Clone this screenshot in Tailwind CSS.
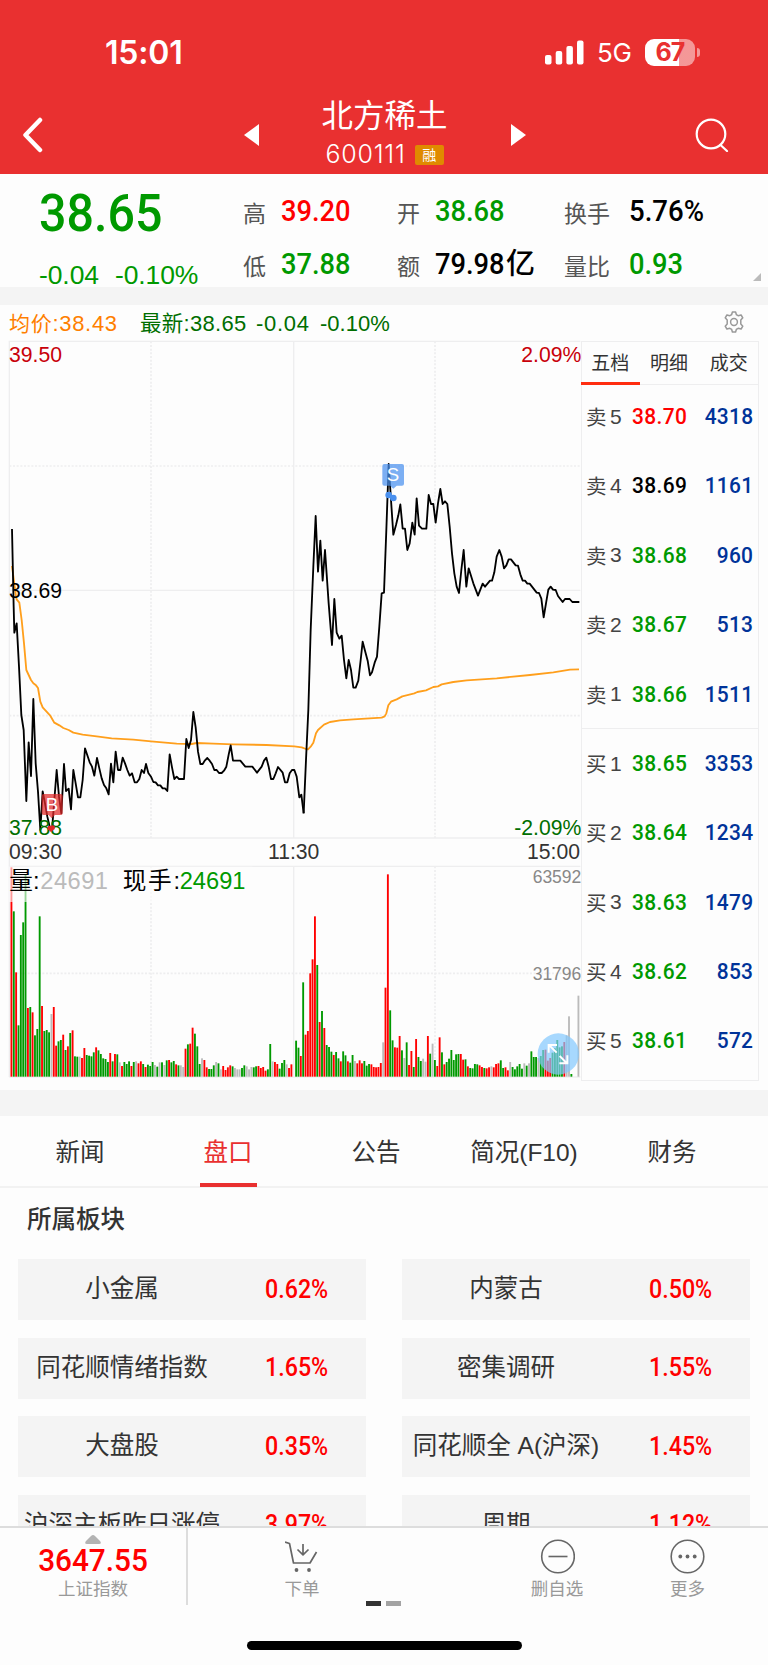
<!DOCTYPE html>
<html lang="zh-CN">
<head>
    <meta charset="UTF-8">
    <meta name="viewport" content="width=device-width, initial-scale=1.0">
    <title>北方稀土 600111</title>
    <script src="https://cdn.jsdelivr.net/npm/@tailwindcss/browser@4"></script>
</head>
<body class="bg-[#fdfdfd] font-['Liberation_Sans','Noto_Sans_CJK_SC',sans-serif] text-[#333]">
<div class="flex h-[1665px] w-[768px] flex-col overflow-hidden">

    <header class="h-[174px] shrink-0 bg-[#e93030] text-white">
        <!-- status bar -->
        <div class="flex h-[94px] items-center justify-between pl-[105px] pr-[68px] pt-[10px] font-['Inter',sans-serif]">
            <span class="pt-[2px] text-[32px] font-semibold leading-none tracking-[-0.2px]">15:01</span>
            <div class="flex items-center">
                <svg class="h-[25px] w-[39px]" viewBox="0 0 39 25" fill="currentColor">
                    <rect x="0" y="15" width="6.5" height="9.5" rx="2"/>
                    <rect x="10.7" y="11" width="6.5" height="13.5" rx="2"/>
                    <rect x="21.4" y="6" width="6.5" height="18.5" rx="2"/>
                    <rect x="32" y="0.5" width="6.5" height="24" rx="2"/>
                </svg>
                <span class="ml-[13px] mt-[2px] w-[35px] text-[26px] leading-none tracking-[-0.3px]">5G</span>
                <div class="ml-[13px] flex h-[27px] w-[50px] items-center justify-center rounded-[9px] bg-linear-to-r from-white from-68% to-white/50 to-68% text-[25px] font-bold leading-none tracking-[-1px] text-[#e93030]">67</div>
                <div class="ml-[2px] h-[9px] w-[3px] rounded-r-full bg-white/50"></div>
            </div>
        </div>
        <!-- title bar -->
        <div class="flex h-[80px] items-center justify-between pl-[22px] pr-[39px]">
            <svg class="mt-[2px] h-[36px] w-[22px]" viewBox="0 0 22 36" fill="none" stroke="currentColor" stroke-width="4.5" stroke-linecap="round" stroke-linejoin="round"><path d="M18 3 3.5 18 18 33"/></svg>
            <div class="ml-[30px] flex items-center">
                <svg class="mt-[1px] h-[22px] w-[15px]" viewBox="0 0 15 22" fill="currentColor"><path d="M15 0v22L0 11z"/></svg>
                <div class="flex w-[252px] flex-col items-center">
                    <div class="mb-[7px] -mt-[4px] text-[31.5px] leading-[38px]">北方稀土</div>
                    <div class="flex h-[26px] items-center pt-[1px]">
                        <span class="font-['Inter',sans-serif] text-[25px] font-light tracking-[0.8px]">600111</span>
                        <span class="ml-[9px] flex h-[20px] w-[29px] items-center justify-center rounded-[2px] bg-[#e08a00] text-[14px]">融</span>
                    </div>
                </div>
                <svg class="mt-[1px] h-[22px] w-[15px]" viewBox="0 0 15 22" fill="currentColor"><path d="M0 0v22l15-11z"/></svg>
            </div>
            <svg class="mt-[2px] h-[34px] w-[34px]" viewBox="0 0 34 34" fill="none" stroke="currentColor" stroke-width="2.2" stroke-linecap="round"><circle cx="16" cy="16" r="14.3"/><path d="m25.500 27 6.500 6"/></svg>
        </div>
    </header>

    <!-- quote -->
    <section class="flex h-[113px] shrink-0 text-[23px]">
        <div class="w-[243px] shrink-0 pl-[39px] text-[#009900]">
            <div class="mt-[13px] h-[54px] origin-left scale-x-[.93] whitespace-nowrap font-['Roboto'] text-[52px] font-medium leading-[54px]">38.65</div>
            <div class="mt-[21px] flex gap-[16px] whitespace-nowrap text-[26.5px] leading-[27px] tracking-[-0.1px]"><span>-0.04</span><span>-0.10%</span></div>
        </div>
        <div class="mt-[11px] grid h-[106px] grid-cols-[154px_167px_190px] grid-rows-2 text-[#555]">
            <div class="flex items-center"><span class="w-[38px] pt-[5px]">高</span><span class="origin-left scale-x-[.94] font-['Roboto'] font-medium text-[29px] text-[#f00]">39.20</span></div>
            <div class="flex items-center"><span class="w-[38px] pt-[5px]">开</span><span class="origin-left scale-x-[.94] font-['Roboto'] font-medium text-[29px] text-[#009900]">38.68</span></div>
            <div class="flex items-center"><span class="w-[65px] pt-[5px]">换手</span><span class="origin-left scale-x-[.95] font-['Roboto'] font-medium text-[29px] text-black">5.76%</span></div>
            <div class="flex items-center"><span class="w-[38px] pt-[5px]">低</span><span class="origin-left scale-x-[.94] font-['Roboto'] font-medium text-[29px] text-[#009900]">37.88</span></div>
            <div class="flex items-center text-black"><span class="w-[38px] pt-[5px] text-[#555]">额</span><span class="w-[71px] origin-left scale-x-[.94] font-['Roboto'] font-medium text-[29px]">79.98</span><span class="text-[29px] font-medium leading-none">亿</span></div>
            <div class="flex items-center"><span class="w-[65px] pt-[5px]">量比</span><span class="origin-left scale-x-[.94] font-['Roboto'] font-medium text-[29px] text-[#009900]">0.93</span></div>
        </div>
        <svg class="mb-[6px] ml-[-1px] h-[8px] w-[8px] self-end" viewBox="0 0 8 8"><path class="fill-[#bbb]" d="M8 0v8H0z"/></svg>
    </section>

    <div class="h-[18px] shrink-0 bg-[#f4f4f4]"></div>

    <!-- chart header -->
    <div class="flex h-[35px] shrink-0 items-center pl-[9px] pr-[23px] pt-[2px] text-[22px] text-[#006e00]">
        <span class="w-[131px] tracking-[0.7px] text-[#ff7f00]"><span class="text-[21px]">均价</span>:38.43</span>
        <span class="w-[116px] tracking-[0.3px]"><span class="text-[21.500px]">最新</span>:38.65</span>
        <span class="w-[64px] tracking-[0.7px]">-0.04</span>
        <span>-0.10%</span>
        <svg class="ml-auto mt-[-4px] h-[22px] w-[22px]" viewBox="0 0 22 22" fill="none" stroke="#999" stroke-width="1.5" stroke-linejoin="round">
            <circle cx="11" cy="11" r="3.400"/>
            <path d="M9.400 1h3.200l.8 2.700q1 .3 1.800 1l2.900-.7 1.700 2.800-2 2.200v4l2 2.200-1.700 2.800-2.900-.7q-.8.7-1.800 1l-.8 2.700H9.400l-.8-2.700q-1-.3-1.800-1l-2.900.7-1.700-2.800 2-2.200V9l-2-2.200L3.900 4l2.900.7q.8-.7 1.800-1z"/>
        </svg>
    </div>

    <section class="flex h-[750px] shrink-0">
        <!-- three units to a pixel -->
        <svg class="h-[742px] w-[581px] shrink-0" viewBox="0 0 1743 2226">
            <g fill="none" stroke="#eeeeef" stroke-width="4">
                <path d="M28 2211V4H1741M28 751H1741M28 1494H1741M28 1579H1741M28 2211H1741M881 4V1494M881 1579V2211"/>
                <path stroke-width="5" stroke-dasharray="6 5" d="M28 378H1741M28 1127H1741M28 1900H1741M453 4V1494M453 1579V2211M1305 4V1494M1305 1579V2211"/>
            </g>
            <g id="volume"></g>
            <rect x="27" y="1580" width="730" height="106" class="fill-[#fdfdfd]/60"/>

            <g fill="none" stroke-width="5.500" stroke-linejoin="round">
                <polyline transform="translate(0 780)" stroke="#ff9f1c" points="36,-102 42,-55 48,-10 50,-2 58,8 65,60 72,130 79,210 93,240 100,250 108,256 114,264 121,305 128,322 150,346 163,368 178,376 190,384 206,390 220,398 248,404 290,409 335,415 400,419 453,424 530,431 575,432 590,429 640,431 700,433 800,435 883,439 905,442 918,447 924,448 932,440 940,428 948,400 954,390 972,374 990,366 1020,361 1060,358 1145,353 1154,349 1159,340 1165,316 1173,305 1190,298 1207,289 1243,280 1252,276 1278,271 1300,261 1314,259 1325,253 1360,246 1400,241 1490,235 1590,225 1660,217 1710,209 1737,208"/>
                <polyline transform="translate(0 780)" stroke="#000" points="36,-213 41,20 43,98 50,70 57,200 64,345 71,390 79,603 86,427 93,528 100,297 107,490 114,575 121,690 128,574 135,610 142,650 149,680 156,690 163,600 170,510 177,590 184,640 192,492 198,573 206,566 213,628 220,510 227,550 234,592 241,592 248,540 255,445 262,466 269,487 276,500 283,527 291,474 298,505 305,535 312,555 319,565 326,583 333,491 340,547 347,455 354,510 361,510 368,473 375,490 382,510 389,527 396,520 404,547 411,547 418,537 425,510 432,519 438,492 445,519 453,530 460,546 467,547 474,556 481,556 488,565 495,565 502,573 509,463 516,502 523,537 530,530 537,537 552,537 559,417 566,444 573,420 580,336 587,382 594,455 601,492 608,492 615,481 622,474 629,482 636,492 643,510 650,510 657,519 665,519 672,512 679,500 686,464 692,436 699,482 721,482 736,500 757,500 771,518 785,500 792,482 799,473 806,500 813,537 820,537 827,520 834,501 848,518 855,547 862,547 869,520 876,510 883,510 890,530 898,592 904,584 911,640"/>
                <polyline transform="translate(870 270)" stroke="#000" points="41,1150 48,990 55,840 62,600 70,410 77,258 84,425 91,332 98,452 105,360 116,520 126,645 133,507 140,608 148,626 155,617 162,690 169,745 176,690 183,720 190,773 197,773 205,752 212,690 218,635 225,662 233,692 240,736 246,727 254,698 261,680 268,590 275,490 282,488 289,300 296,102 303,210 310,314 318,285 325,256 331,223 338,296 345,296 352,360 359,340 367,278 374,314 380,205 387,287 396,296 409,296 416,195 423,222 430,222 437,278 444,220 451,177 458,222 465,214 472,222 479,290 486,370 493,430 500,470 507,489 514,420 521,360 529,470 536,415 550,460 564,497 578,461 585,470 600,452 606,452 613,427 620,380 628,360 635,380 642,415 649,406 656,388 663,388 677,406 684,407 691,433 698,452 705,452 712,461 719,461 740,488 747,489 754,506 761,562 768,520 775,479 782,470 789,479 797,480 804,498 818,516 825,507 839,507 847,516 868,516"/>
            </g>

            <g class="text-[63.500px]">
                <text x="27" y="65" class="fill-[#c8000a]">39.50</text>
                <text x="1744" y="65" text-anchor="end" class="fill-[#c8000a]">2.09%</text>
                <text x="27" y="773">38.69</text>
                <text x="27" y="1484" class="fill-[#006e00]">37.88</text>
                <text x="1744" y="1484" text-anchor="end" class="fill-[#006e00]">-2.09%</text>
                <text x="27" y="1558" class="fill-[#333]">09:30</text>
                <text x="881" y="1558" text-anchor="middle" class="fill-[#333]">11:30</text>
                <text x="1740" y="1558" text-anchor="end" class="fill-[#333]">15:00</text>
            </g>
            <g class="fill-[#888] text-[52.5px]" text-anchor="end">
                <text x="1744" y="1629">63592</text>
                <text x="1744" y="1921">31796</text>
            </g>
            <g class="text-[71px]">
                <text x="28" y="1647">量:</text>
                <text x="121" y="1647" textLength="203" class="fill-[#bbb]">24691</text>
                <text x="368" y="1647" textLength="172">现手:</text>
                <text x="539" y="1647" class="fill-[#009900]">24691</text>
            </g>

            <!-- sell / buy marks -->
            <g class="fill-[#4a90ee]">
                <path fill-opacity=".72" d="M1153 372h53q6 0 6 6v53q0 6-6 6h-16l-10 9-10-9h-17q-6 0-6-6v-53q0-6 6-6z"/>
                <circle cx="1166" cy="465" r="10"/><circle cx="1180" cy="474" r="10"/>
                <path stroke="#4a90ee" stroke-width="9" d="m1166 465 14 9"/>
            </g>
            <text x="1179" y="424" text-anchor="middle" class="fill-white text-[56px]">S</text>
            <g class="fill-[#e22828]">
                <path fill-opacity=".72" d="M131 1362h51q6 0 6 6v51q0 6-6 6h-17l-10 10-9-10h-15q-6 0-6-6v-51q0-6 6-6z"/>
                <circle cx="149" cy="1464" r="7"/><circle cx="158" cy="1463" r="7"/><circle cx="153" cy="1469" r="6"/>
            </g>
            <text x="156" y="1414" text-anchor="middle" class="fill-white text-[56px]">B</text>

            <!-- full screen button -->
            <circle cx="1675" cy="2142" r="62" class="fill-[#81c8fd]/70"/>
            <path fill="none" stroke="#fff" stroke-width="6" d="m1648 2116 22 22M1646 2138v-23h25M1679 2148l22 22M1702 2146v24h-24"/>
        </svg>

        <!-- order book -->
        <div class="mt-[1px] h-[740px] w-[178px] border border-[#eeeeef]">
            <div class="flex h-[43px] items-center border-b border-[#eeeeef] pt-[2px] text-[19px]">
                <div class="relative flex h-full w-[57px] items-center justify-center">五档<i class="absolute -bottom-px -left-px h-[3px] w-[59px] bg-[#ff2d10]"></i></div>
                <div class="w-[61px] text-center">明细</div>
                <div class="w-[59px] text-center">成交</div>
            </div>
            <div class="-mt-[4px] flex h-[694px] flex-col font-['Roboto','Noto_Sans_CJK_SC'] text-[22.5px] font-medium leading-none" id="book"></div>
        </div>
    </section>

    <div class="h-[26px] shrink-0 bg-[#f4f4f4]"></div>

    <nav class="flex h-[72px] shrink-0 border-b-2 border-[#f2f2f2] px-[6px] text-[24.5px]">
        <a class="flex w-[148px] items-center justify-center pt-[5px]">新闻</a>
        <a class="relative flex w-[148px] items-center justify-center pt-[5px] text-[#e93030]">盘口<i class="absolute -bottom-[1px] left-[46px] h-[4px] w-[57px] bg-[#e93030]"></i></a>
        <a class="flex w-[148px] items-center justify-center pt-[5px]">公告</a>
        <a class="flex w-[148px] items-center justify-center pt-[5px]">简况(F10)</a>
        <a class="flex w-[148px] items-center justify-center pt-[5px]">财务</a>
    </nav>

    <section class="h-[338px] shrink-0 overflow-hidden">
        <h2 class="h-[71px] pl-[27px] pt-[12px] text-[24.500px] font-medium leading-[40px]">所属板块</h2>
        <div class="grid grid-cols-2 gap-x-[36px] gap-y-[17.500px] px-[18px]" id="sectors"></div>
    </section>

    <!-- bottom bar -->
    <footer class="h-[139px] shrink-0 border-t-2 border-[#ddd] text-[17.500px] text-[#999]">
        <div class="flex h-[77px]">
            <div class="flex w-[188px] flex-col items-center border-r-2 border-[#ddd]">
                <svg class="mt-[7px] h-[9px] w-[16px] shrink-0" viewBox="0 0 16 9"><path class="fill-[#b3b3b3]" d="M8 0q1 0 2 1l5 5q2 3-1 3H2q-3 0-1-3l5-5q1-1 2-1z"/></svg>
                <span class="-mt-px scale-x-[.93] font-['Roboto'] text-[32px] font-medium leading-[34px] text-[#f00]">3647.55</span>
                <span class="mt-[2px] leading-[21px]">上证指数</span>
            </div>
            <div class="flex w-[228px] flex-col items-center">
                <svg class="mt-[11px] h-[35px] w-[35px]" viewBox="0 0 35 35" fill="none" stroke="#666" stroke-width="1.700" stroke-linejoin="round">
                    <path d="M0 3l4.500 1.500L8.500 24H25l6.500-11M18 5v10.500M12.500 10.500l5.500 5.300 5.500-5.300"/>
                    <circle cx="11.500" cy="31" r="1.900" fill="#666" stroke="none"/><circle cx="24" cy="31" r="1.900" fill="#666" stroke="none"/>
                </svg>
                <span class="mt-[3px] leading-[24px]">下单</span>
            </div>
            <div class="ml-[77px] flex w-[128px] flex-col items-center">
                <svg class="mt-[11px] h-[35px] w-[35px]" viewBox="0 0 35 35" fill="none" stroke="#666" stroke-width="1.600"><circle cx="18" cy="17.500" r="16.300"/><path d="M8.500 17.500h19"/></svg>
                <span class="mt-[3px] leading-[24px]">删自选</span>
            </div>
            <div class="flex w-[133px] flex-col items-center">
                <svg class="mt-[11px] h-[35px] w-[35px]" viewBox="0 0 35 35" fill="none" stroke="#666" stroke-width="1.600"><circle cx="17.500" cy="17.500" r="16.300"/><g fill="#666" stroke="none"><circle cx="10.300" cy="17.500" r="1.900"/><circle cx="17.500" cy="17.500" r="1.900"/><circle cx="24.700" cy="17.500" r="1.900"/></g></svg>
                <span class="mt-[3px] leading-[24px]">更多</span>
            </div>
        </div>
        <div class="-mt-[4px] flex justify-center gap-[5px] pr-[2px]">
            <i class="h-[5px] w-[15px] bg-[#333]"></i>
            <i class="h-[5px] w-[15px] bg-[#a3a3a3]"></i>
        </div>
        <div class="mx-auto mt-[35px] h-[9px] w-[275px] rounded-full bg-black"></div>
    </footer>
</div>

<script>
    // one entry per minute: r = up, g = down, n = flat, - = no trade
    const volumes = `r628 g496 r313 g154 g425 g463 g605 r206 g209 r193 g124 g143 g481 r212 g137 g140 g133 n188 r209 r93
        g106 g110 r126 g80 r91 g131 r139 g61 g60 n60 r56 r86 g65 g63 g61 g73 r88 g79 g68 g55
        g53 g44 r71 g46 r68 g67 n43 r32 g44 g38 g46 r32 g44 n46 r40 r46 g38 r29 g36 g32
        g44 n35 g30 n43 g43 n35 g49 r50 g43 g47 r37 g34 n34 n29 r84 g97 r99 r147 g129 g91
        g38 n55 r50 r28 g23 g23 g34 n44 g40 n22 r32 r20 r28 r34 g31 n26 n22 n22 g26 g34
        n31 n22 n29 g28 g31 r32 r26 r29 r18 g22 g98 n46 r44 r38 g24 g41 g50 n37 r26 r37
        - g108 g87 r62 g283 r126 r137 r310 r352 r481 g335 r164 g197 r146 g95 g89 g75 r65 g74 g55
        r46 g76 g64 r46 g42 g65 n47 r40 r49 r40 g47 g33 g38 r37 r29 r28 r29 r41 n103 r267
        r607 g199 g109 r88 r87 r122 g79 n56 g103 r35 r77 g29 r113 g59 g47 n54 n45 r122 g69 n99
        g50 r32 r118 g73 r37 g44 g54 g80 g50 g67 g68 r68 r51 g52 r31 g26 g25 g38 g37 r34
        r29 g26 r25 r28 n31 r28 r38 r40 g49 g26 r28 r19 n44 g29 g22 g31 g38 g24 n40 g33
        n40 g76 g59 g59 n56 g62 g80 r81 r48 r56 g72 g85 g110 g88 g91 r104 n124 n181 g8 - - n243`.split(/\s+/);
    const fills = { r: 'fill-[#ff0000]', g: 'fill-[#009900]', n: 'fill-[#bbbbbb]' };

    document.getElementById('volume').innerHTML = volumes.map((v, i) => {
        if (v === '-') return '';
        const h = +v.slice(1);
        return `<rect x="${(31.5 + i * 7.058).toFixed(1)}" y="${2210 - h}" width="5.600" height="${h}" class="${fills[v[0]]}"/>`;
    }).join('');

    const orders = [
        ['卖', 5, '38.70', 4318, 'text-[#ff0000]'],
        ['卖', 4, '38.69', 1161, 'text-black'],
        ['卖', 3, '38.68', 960, 'text-[#009900]'],
        ['卖', 2, '38.67', 513, 'text-[#009900]'],
        ['卖', 1, '38.66', 1511, 'text-[#009900]'],
        ['买', 1, '38.65', 3353, 'text-[#009900]'],
        ['买', 2, '38.64', 1234, 'text-[#009900]'],
        ['买', 3, '38.63', 1479, 'text-[#009900]'],
        ['买', 4, '38.62', 853, 'text-[#009900]'],
        ['买', 5, '38.61', 572, 'text-[#009900]'],
    ];
    document.getElementById('book').innerHTML = orders.map(([side, level, price, vol, color], i) => `
        <div class="flex h-[69.4px] shrink-0 items-center pl-[4px] pr-[5px] pt-px ${i === 5 ? 'border-t border-[#eeeeef]' : ''}">
            <span class="w-[24px] font-['Noto_Sans_CJK_SC'] text-[20.500px] font-normal text-[#444]">${side}</span>
            <span class="w-[22px] font-['Liberation_Sans'] text-[21px] font-normal text-[#444]">${level}</span>
            <span class="origin-left scale-x-[.93] tracking-[0.4px] ${color}">${price}</span>
            <span class="ml-auto origin-right scale-x-[.93] tracking-[0.3px] text-[#003399]">${vol}</span>
        </div>`).join('');

    const sectors = [
        ['小金属', '0.62%'], ['内蒙古', '0.50%'],
        ['同花顺情绪指数', '1.65%'], ['密集调研', '1.55%'],
        ['大盘股', '0.35%'], ['同花顺全 A(沪深)', '1.45%'],
        ['沪深主板昨日涨停', '3.97%'], ['周期', '1.12%'],
    ];
    document.getElementById('sectors').innerHTML = sectors.map(([name, pct]) => `
        <div class="flex h-[61px] items-center whitespace-nowrap bg-[#f4f4f4]">
            <span class="flex w-[208px] justify-center text-[24.5px]">${name}</span>
            <span class="ml-[39px] origin-left scale-x-[.93] font-['Roboto'] text-[25px] font-medium text-[#f00]">${pct}</span>
        </div>`).join('');
</script>
</body>
</html>
